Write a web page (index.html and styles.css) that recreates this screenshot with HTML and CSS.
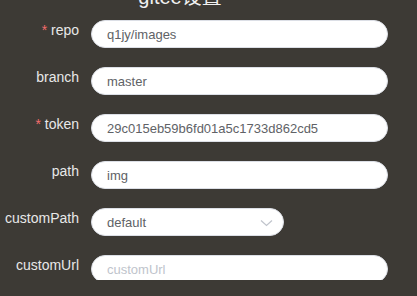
FILE: index.html
```html
<!DOCTYPE html>
<html lang="zh-CN">
<head>
<meta charset="UTF-8" />
<meta name="viewport" content="width=device-width, initial-scale=1" />
<title>gitee设置</title>
<link rel="stylesheet" href="styles.css">
</head>
<body>
<div class="panel">
    <h2 class="title">gitee设置</h2>
    <form class="setting-form">
        <div class="form-item">
            <label class="form-label" for="repo"><span class="required">*</span> repo</label>
            <input class="form-input" type="text" id="repo" value="q1jy/images" />
        </div>
        <div class="form-item">
            <label class="form-label" for="branch">branch</label>
            <input class="form-input" type="text" id="branch" value="master" />
        </div>
        <div class="form-item">
            <label class="form-label" for="token"><span class="required">*</span> token</label>
            <input class="form-input" type="text" id="token" value="29c015eb59b6fd01a5c1733d862cd5" />
        </div>
        <div class="form-item">
            <label class="form-label" for="path">path</label>
            <input class="form-input" type="text" id="path" value="img" />
        </div>
        <div class="form-item">
            <label class="form-label" for="customPath">customPath</label>
            <div class="select">
                <span class="select-value">default</span>
                <svg class="select-arrow" width="13" height="8" viewBox="0 0 13 8">
                    <path d="M1 1.5 L6.5 6.5 L12 1.5" fill="none" stroke="#c0c4cc" stroke-width="1.2" />
                </svg>
            </div>
        </div>
        <div class="form-item">
            <label class="form-label" for="customUrl">customUrl</label>
            <input class="form-input" type="text" id="customUrl" placeholder="customUrl" />
        </div>
    </form>
</div>
</body>
</html>
```
FILE: styles.css
```css
body { margin: 0; background-color: #3d3a35; font-family: "Liberation Sans", Arial, sans-serif; overflow: hidden; }
.panel { width: 417px; height: 296px; }
.title { width: 360px; margin: -16px 0 0; text-align: center; font-size: 20px; font-weight: normal; line-height: 26px; color: #f0f0f0; font-family: "Liberation Sans", "Noto Sans CJK SC", sans-serif; height: 36px; }
.setting-form { display: flex; flex-direction: column; gap: 19px; }
.form-item { display: flex; align-items: flex-start; height: 28px; }
.form-label { width: 79px; padding-right: 12px; text-align: right; font-size: 14px; line-height: 20px; color: #e8e8e8; flex-shrink: 0; }
.required { color: #f56c6c; }
.form-input { width: 297px; height: 28px; box-sizing: border-box; padding: 0 15px; border: 1px solid #dcdfe6; border-radius: 14px; background: #fff; font-family: "Liberation Sans", Arial, sans-serif; font-size: 13px; color: #606266; outline: none; }
.form-input::placeholder { color: #c0c4cc; }
.select { width: 193px; height: 28px; box-sizing: border-box; padding: 0 10px 0 15px; border: 1px solid #dcdfe6; border-radius: 14px; background: #fff; display: flex; align-items: center; justify-content: space-between; font-size: 13px; color: #606266; }
.select-arrow { margin-top: 1px; }
```
